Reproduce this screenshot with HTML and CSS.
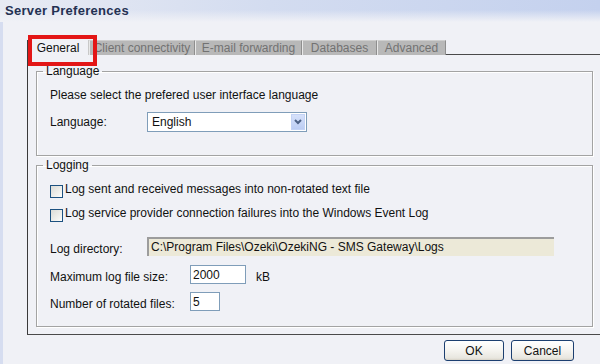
FILE: index.html
```html
<!DOCTYPE html>
<html>
<head>
<meta charset="utf-8">
<title>Server Preferences</title>
<link rel="stylesheet" href="styles.css">
</head>
<body>
<div class="titlebar">Server Preferences</div>
<div class="main">
  <div class="tabs">
    <div class="tab tab-general active">General</div>
    <div class="tab tab-client">Client connectivity</div>
    <div class="tab tab-email">E-mail forwarding</div>
    <div class="tab tab-db">Databases</div>
    <div class="tab tab-adv">Advanced</div>
    <div class="tab-fill"></div>
  </div>
  <div class="panel">
    <fieldset class="group group-lang">
      <legend>Language</legend>
      <p class="hint">Please select the prefered user interface language</p>
      <div class="row row-select">
        <span class="lbl lbl-short">Language:</span>
        <div class="select">
          <span class="select-value">English</span>
          <span class="select-arrow"><svg width="8" height="6" viewBox="0 0 8 6"><polyline points="1,1 4,4 7,1" fill="none" stroke="#4d6185" stroke-width="2"/></svg></span>
        </div>
      </div>
    </fieldset>
    <fieldset class="group group-log">
      <legend>Logging</legend>
      <div class="check-row first"><span class="checkbox"></span><span>Log sent and received messages into non-rotated text file</span></div>
      <div class="check-row"><span class="checkbox"></span><span>Log service provider connection failures into the Windows Event Log</span></div>
      <div class="row row-field row-dir">
        <span class="lbl lbl-short">Log directory:</span>
        <div class="readonly">C:\Program Files\Ozeki\OzekiNG - SMS Gateway\Logs</div>
      </div>
      <div class="row row-field row-size">
        <span class="lbl lbl-long">Maximum log file size:</span>
        <div class="input input-size">2000</div>
        <span class="unit">kB</span>
      </div>
      <div class="row row-field row-rot">
        <span class="lbl lbl-long">Number of rotated files:</span>
        <div class="input input-rot">5</div>
      </div>
    </fieldset>
  </div>
  <div class="buttons">
    <button class="btn btn-ok">OK</button>
    <button class="btn btn-cancel">Cancel</button>
  </div>
</div>
</body>
</html>
```
FILE: styles.css
```css
* { box-sizing: border-box; }
html, body { margin: 0; padding: 0; }
body {
  width: 600px;
  height: 364px;
  overflow: hidden;
  background: #f0f1f6;
  font-family: "Liberation Sans", Arial, sans-serif;
  font-size: 12px;
  line-height: 14px;
  color: #111;
}
.titlebar {
  height: 22px;
  padding: 3px 0 0 5px;
  font-size: 13px;
  font-weight: bold;
  letter-spacing: 0.3px;
  line-height: 16px;
  color: #243152;
  background:
    linear-gradient(to bottom, rgba(240,241,246,0) 0%, rgba(240,241,246,0) 45%, #f0f1f6 100%),
    linear-gradient(to right, #e8ebf3 0%, #d3dcf0 45%, #c4d1ee 100%);
}
.main {
  height: 342px;
  border-left: 3px solid #d6ddf0;
  padding: 18px 0 0 24px;
}
.tabs {
  display: flex;
  height: 15px;
}
.tab {
  height: 15px;
  line-height: 14px;
  text-align: center;
  background: #b8b8b8;
  color: #727272;
  border-top: 1px solid #cfcfcf;
  border-left: 1px solid #e8e8e8;
  border-right: 1px solid #8e8e8e;
  white-space: nowrap;
}
.tab-general { width: 62px; }
.tab-client { width: 106px; }
.tab-email { width: 107px; }
.tab-db { width: 75px; }
.tab-adv { width: 69px; }
.tab.active {
  position: relative;
  background: #f0f1f6;
  color: #111;
  border-top: none;
  border-left: 1px solid #3a3a3a;
  border-right: 1px solid #c8c8c8;
  padding-top: 1px;
}
.tab.active::after {
  content: "";
  position: absolute;
  left: 0;
  top: -5px;
  width: 61px;
  height: 23px;
  border: 4px solid #e31616;
}
.tab-fill {
  flex: 1;
  border-bottom: 1px solid #4a4a4a;
}
.panel {
  border-left: 1px solid #3a3a3a;
  border-bottom: 1px solid #4a4a4a;
  padding: 9px 7px 7px 8px;
}
.group {
  margin: 0;
  padding: 0 10px 0 13px;
  border: 1px solid #a3a3a3;
  box-shadow: inset 1px 1px 0 #fff, 1px 1px 0 #fff;
}
.group legend {
  padding: 0 3px;
  margin-left: -7px;
  line-height: 14px;
}
.group-lang { padding-bottom: 23px; }
.group-log { margin-top: 2px; padding-bottom: 15px; }
.hint { margin: 10px 0 0; }
.row { display: flex; }
.row-select { margin-top: 10px; height: 20px; align-items: center; }
.lbl { flex: none; }
.lbl-short { width: 97px; }
.lbl-long { width: 140px; }
.select {
  width: 160px;
  height: 20px;
  border: 1px solid #7f9db9;
  background: #fff;
  display: flex;
  justify-content: space-between;
  align-items: stretch;
}
.select-value { padding: 2px 0 0 4px; }
.select-arrow {
  width: 14px;
  margin: 1px 1px 1px 0;
  border: 1px solid #c4d3f5;
  background: linear-gradient(to bottom, #d6e1fa 0%, #bccdf3 100%);
  display: flex;
  align-items: center;
  justify-content: center;
}
.check-row {
  display: flex;
  align-items: flex-start;
  height: 14px;
  margin-top: 10px;
}
.checkbox {
  flex: none;
  width: 13px;
  height: 13px;
  margin: 3px 2px 0 0;
  border: 1px solid #1c5180;
  background: linear-gradient(135deg, #dcdcd7 0%, #f2f2ef 70%, #fff 100%);
}
.row-field { height: 19px; align-items: flex-end; }
.row-dir { margin-top: 17px; }
.row-size { margin-top: 9px; }
.row-rot { margin-top: 8px; }
.readonly {
  width: 407px;
  height: 19px;
  padding: 1px 0 0 2px;
  background: #ece9d8;
  border-top: 2px solid #9c9c9c;
  border-left: 2px solid #9c9c9c;
  color: #111;
  white-space: nowrap;
}
.input {
  height: 19px;
  padding: 2px 2px 1px 2px;
  border: 1px solid #7f9db9;
  background: #fff;
}
.input-size { width: 56px; }
.input-rot { width: 30px; }
.unit { margin-left: 10px; }
.buttons {
  display: flex;
  justify-content: flex-end;
  gap: 7px;
  padding-right: 26px;
  margin-top: 5px;
}
.btn {
  height: 21px;
  padding: 0;
  font-family: "Liberation Sans", Arial, sans-serif;
  font-size: 12px;
  line-height: 14px;
  color: #111;
  border: 1px solid #1c3f70;
  border-radius: 3px;
  background: linear-gradient(to bottom, #ffffff 0%, #f5f4f0 50%, #e8e6df 90%, #d6d2c6 100%);
}
.btn-ok { width: 60px; }
.btn-cancel { width: 63px; }
```
